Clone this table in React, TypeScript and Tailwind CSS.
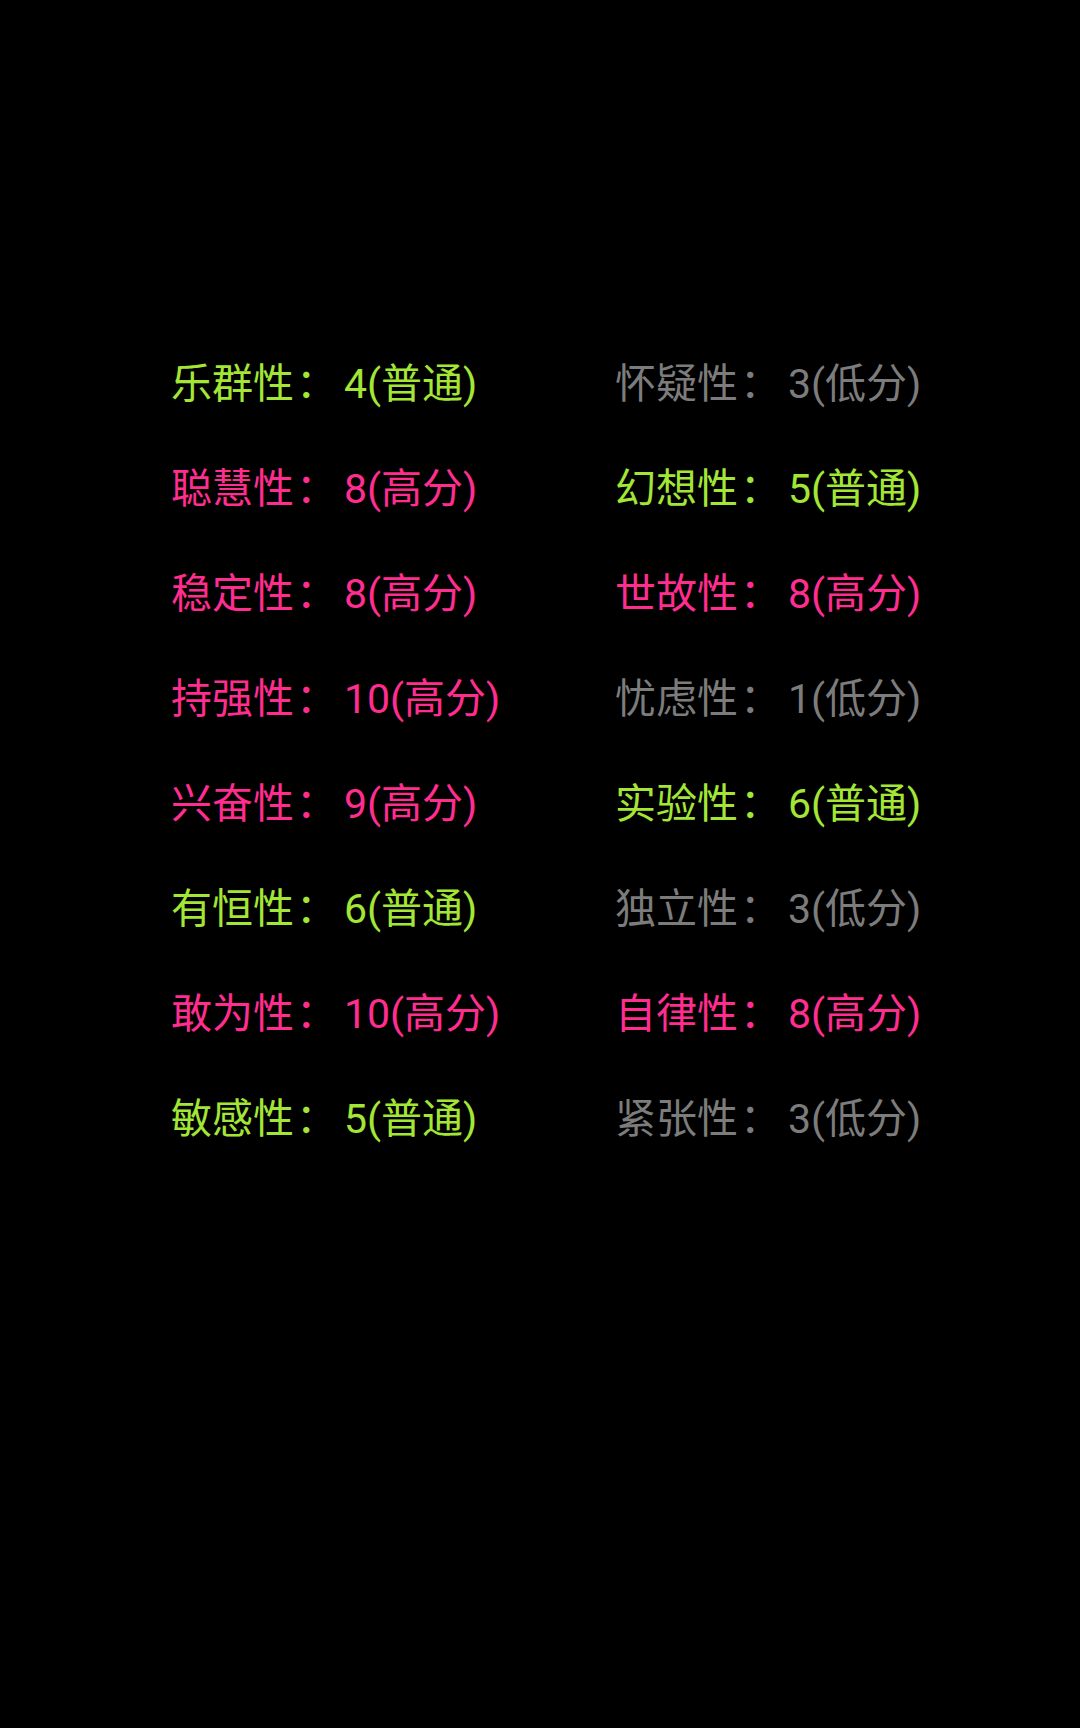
const G = "text-[#a3e635]";
const P = "text-[#ff2d8f]";
const N = "text-[#7c7c7c]";

// [name, value, colour] × 2 per row
const rows: [string, string, string, string, string, string][] = [
  ["乐群性", "4(普通)", G, "怀疑性", "3(低分)", N],
  ["聪慧性", "8(高分)", P, "幻想性", "5(普通)", G],
  ["稳定性", "8(高分)", P, "世故性", "8(高分)", P],
  ["持强性", "10(高分)", P, "忧虑性", "1(低分)", N],
  ["兴奋性", "9(高分)", P, "实验性", "6(普通)", G],
  ["有恒性", "6(普通)", G, "独立性", "3(低分)", N],
  ["敢为性", "10(高分)", P, "自律性", "8(高分)", P],
  ["敏感性", "5(普通)", G, "紧张性", "3(低分)", N],
];

function Item({ name, value, color, className = "" }: { name: string; value: string; color: string; className?: string }) {
  return (
    <span className={`${color} ${className}`}>
      {name}
      <span className="pl-[2px] pr-[7px] font-['Noto_Sans_CJK_SC',sans-serif]">：</span>
      {value}
    </span>
  );
}

export default function App() {
  return (
    <div className="min-h-[1728px] w-[1080px] bg-black pl-[171px] pt-[330px] font-['Roboto','Noto_Sans_CJK_SC',sans-serif] text-[41px]">
      {rows.map(([a, av, ca, b, bv, cb], i) => (
        <div key={i} className="flex h-[105px] items-center">
          <Item name={a} value={av} color={ca} className="w-[444px]" />
          <Item name={b} value={bv} color={cb} />
        </div>
      ))}
    </div>
  );
}
